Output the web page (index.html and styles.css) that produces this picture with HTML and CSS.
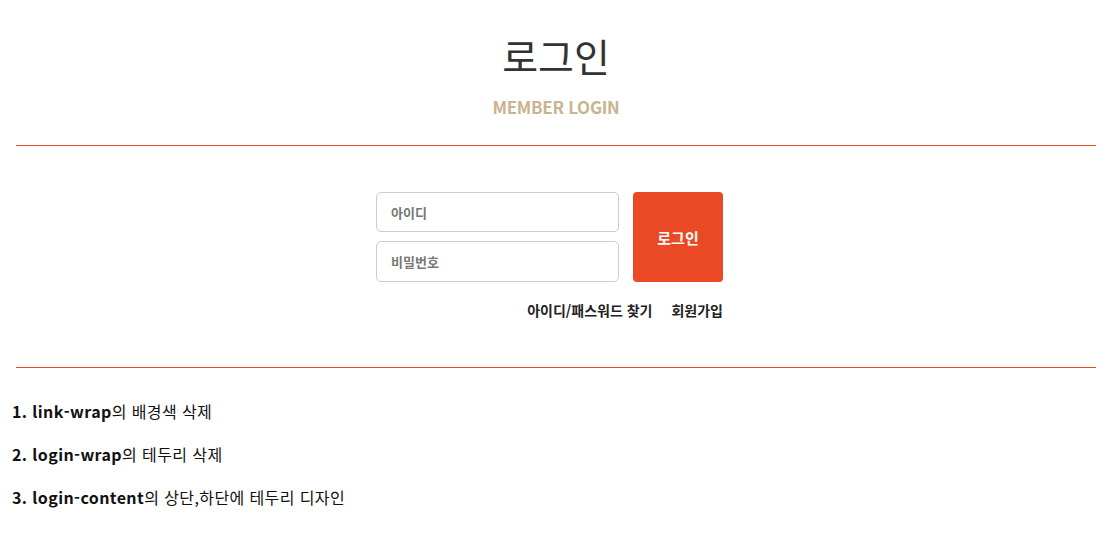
FILE: index.html
```html
<!DOCTYPE html>
<html lang="ko">
<head>
<meta charset="utf-8">
<title>로그인</title>
<link rel="stylesheet" href="styles.css">
</head>
<body>
<div class="page">
  <header class="login-head">
    <h1 class="title">로그인</h1>
    <p class="subtitle">MEMBER LOGIN</p>
  </header>
  <section class="login-content">
    <div class="login-wrap">
      <form class="login-form">
        <div class="fields">
          <input class="field" type="text" placeholder="아이디">
          <input class="field" type="password" placeholder="비밀번호">
        </div>
        <button class="login-btn" type="button">로그인</button>
      </form>
      <div class="link-wrap">
        <a href="#" class="link">아이디/패스워드 찾기</a>
        <a href="#" class="link">회원가입</a>
      </div>
    </div>
  </section>
  <div class="notes">
    <p class="note"><b>1. link-wrap</b>의 배경색 삭제</p>
    <p class="note"><b>2. login-wrap</b>의 테두리 삭제</p>
    <p class="note"><b>3. login-content</b>의 상단,하단에 테두리 디자인</p>
  </div>
</div>
</body>
</html>
```
FILE: styles.css
```css
* { box-sizing: border-box; }
html, body { margin: 0; padding: 0; background: #fff; }
body {
  font-family: "Noto Sans CJK KR", "Noto Sans", sans-serif;
  color: #222;
}
.page { margin: 0 24px 0 16px; }
.login-head {
  text-align: center;
  padding-top: 27px;
  padding-bottom: 26px;
}
.title {
  margin: 0;
  font-size: 39px;
  font-weight: 400;
  line-height: 56px;
  color: #333;
}
.subtitle {
  margin: 12px 0 0;
  font-size: 17px;
  font-weight: 700;
  line-height: 24px;
  color: #c9b48f;
  letter-spacing: -0.3px;
}
.login-content {
  border-top: 1px solid #e84a24;
  border-bottom: 1px solid #e84a24;
  padding: 46px 0 46px;
}
.login-wrap {
  width: 347px;
  margin-left: 360px;
}
.login-form {
  display: flex;
  gap: 14px;
}
.fields {
  display: flex;
  flex-direction: column;
  gap: 9px;
  width: 243px;
}
.field {
  height: 40px;
  border: 1px solid #ccc;
  border-radius: 5px;
  padding: 0 14px;
  font-family: inherit;
  font-size: 13px;
  font-weight: 700;
  color: #333;
  outline: none;
}
.field + .field { height: 41px; }
.field::placeholder { color: #777; }
.login-btn {
  width: 90px;
  height: 90px;
  border: none;
  border-radius: 4px;
  background: #e94a25;
  color: #fff;
  font-family: inherit;
  font-size: 15px;
  font-weight: 700;
  padding: 0;
}
.link-wrap {
  display: flex;
  justify-content: flex-end;
  gap: 19px;
  margin-top: 18px;
}
.link {
  font-size: 14px;
  font-weight: 700;
  color: #222;
  text-decoration: none;
  line-height: 21px;
}
.notes { padding: 31px 0 0; margin-left: -4px; }
.note {
  margin: 0 0 18px;
  font-size: 16px;
  line-height: 25px;
  letter-spacing: 0.4px;
  color: #111;
}
.note b { font-weight: 700; }
```
